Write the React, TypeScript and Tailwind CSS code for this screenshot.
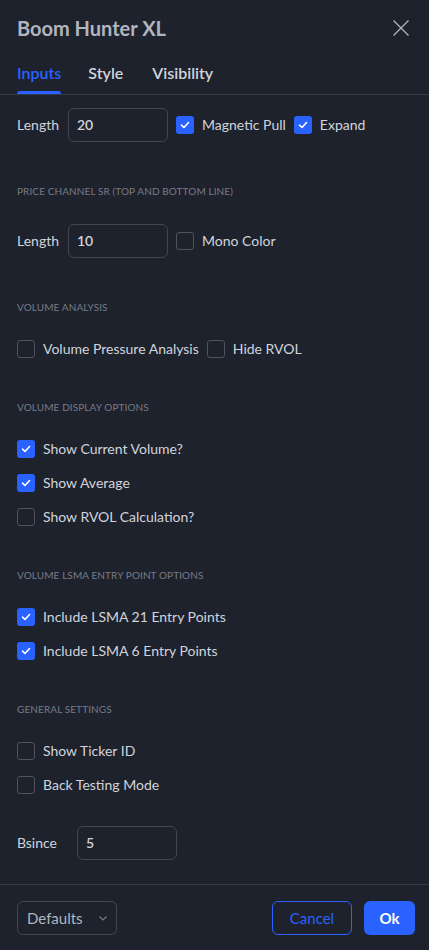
import React from "react";

function Check({ on }: { on?: boolean }) {
  if (on) {
    return (
      <span className="flex h-[18px] w-[18px] shrink-0 items-center justify-center rounded-[3px] bg-[#2962ff]">
        <svg width="12" height="12" viewBox="0 0 12 12" fill="none">
          <path d="M2.5 6.2 5 8.5l4.5-5" stroke="#fff" strokeWidth="1.6" strokeLinecap="round" strokeLinejoin="round" />
        </svg>
      </span>
    );
  }
  return <span className="h-[18px] w-[18px] shrink-0 rounded-[3px] border border-[#50535e]" />;
}

function CheckItem({ label, on }: { label: string; on?: boolean }) {
  return (
    <div className="flex items-center gap-2">
      <Check on={on} />
      <span className="-translate-y-px">{label}</span>
    </div>
  );
}

function Field({ value, w = "w-[100px]" }: { value: string; w?: string }) {
  return (
    <div className={`flex h-[34px] ${w} items-center rounded-md border border-[#434651] px-2 font-semibold text-[#d1d4dc]`}>
      <span className="-translate-y-px">{value}</span>
    </div>
  );
}

function Heading({ children, className = "" }: { children: React.ReactNode; className?: string }) {
  return <div className={`h-4 text-[10px] leading-4 tracking-[0.1px] text-[#787b86] ${className}`}>{children}</div>;
}

export default function App() {
  return (
    <div
      className="flex h-[950px] w-[429px] flex-col bg-[#1e222d] text-[14px] text-[#d1d4dc]"
      style={{ fontFamily: "Lato, 'Noto Sans', sans-serif" }}
    >
      {/* Header */}
      <div className="flex h-14 items-center justify-between px-[17px]">
        <div className="text-[20px] font-bold text-[#b2b5be]">Boom Hunter XL</div>
        <svg width="18" height="18" viewBox="0 0 18 18" fill="none" className="mr-[2px]">
          <path d="M1.5 1.5l15 15M16.5 1.5l-15 15" stroke="#b2b5be" strokeWidth="1.3" />
        </svg>
      </div>

      {/* Tabs */}
      <div className="flex h-[39px] border-b border-[#363a45] px-[17px] text-[16px] font-semibold">
        <div className="flex flex-col justify-between text-[#2962ff]">
          <span className="pt-[5px]">Inputs</span>
          <span className="h-[3px] rounded-t-sm bg-[#2962ff]" />
        </div>
        <span className="ml-[27px] pt-[5px] text-[#d1d4dc]">Style</span>
        <span className="ml-[29px] pt-[5px] text-[#d1d4dc]">Visibility</span>
      </div>

      {/* Body */}
      <div className="flex-1 px-[17px] pt-[13px]">
        <div className="flex h-[34px] items-center gap-2">
          <span className="mr-[1px] -translate-y-px">Length</span>
          <Field value="20" />
          <CheckItem label="Magnetic Pull" on />
          <CheckItem label="Expand" on />
        </div>

        <Heading className="mt-[41px]">PRICE CHANNEL SR (TOP AND BOTTOM LINE)</Heading>
        <div className="mt-[25px] flex h-[34px] items-center gap-2">
          <span className="mr-[1px] -translate-y-px">Length</span>
          <Field value="10" />
          <CheckItem label="Mono Color" />
        </div>

        <Heading className="mt-[41px]">VOLUME ANALYSIS</Heading>
        <div className="mt-[17px] flex h-[34px] items-center gap-2">
          <CheckItem label="Volume Pressure Analysis" />
          <CheckItem label="Hide RVOL" />
        </div>

        <Heading className="mt-[33px]">VOLUME DISPLAY OPTIONS</Heading>
        <div className="mt-[17px] flex flex-col">
          <div className="flex h-[34px] items-center"><CheckItem label="Show Current Volume?" on /></div>
          <div className="flex h-[34px] items-center"><CheckItem label="Show Average" on /></div>
          <div className="flex h-[34px] items-center"><CheckItem label="Show RVOL Calculation?" /></div>
        </div>

        <Heading className="mt-[33px]">VOLUME LSMA ENTRY POINT OPTIONS</Heading>
        <div className="mt-[17px] flex flex-col">
          <div className="flex h-[34px] items-center"><CheckItem label="Include LSMA 21 Entry Points" on /></div>
          <div className="flex h-[34px] items-center"><CheckItem label="Include LSMA 6 Entry Points" on /></div>
        </div>

        <Heading className="mt-[33px]">GENERAL SETTINGS</Heading>
        <div className="mt-[17px] flex flex-col">
          <div className="flex h-[34px] items-center"><CheckItem label="Show Ticker ID" /></div>
          <div className="flex h-[34px] items-center"><CheckItem label="Back Testing Mode" /></div>
        </div>

        <div className="mt-[24px] flex h-[34px] items-center">
          <span className="w-[60px] -translate-y-px">Bsince</span>
          <Field value="5" />
        </div>
      </div>

      {/* Footer */}
      <div className="flex h-[66px] items-start justify-between border-t border-[#363a45] pl-[17px] pr-[14px] pt-4">
        <div className="flex h-[34px] w-[100px] items-center justify-between rounded-md border border-[#434651] pl-[9px] pr-[7px] text-[15px] text-[#b2b5be]">
          <span>Defaults</span>
          <svg width="12" height="12" viewBox="0 0 12 12" fill="none">
            <path d="M2.5 4.5 6 8l3.5-3.5" stroke="#787b86" strokeWidth="1.2" />
          </svg>
        </div>
        <div className="flex gap-3">
          <div className="flex h-[34px] w-[80px] items-center justify-center rounded-md border border-[#2962ff] text-[15px] text-[#2962ff]">
            Cancel
          </div>
          <div className="flex h-[34px] w-[51px] items-center justify-center rounded-md bg-[#2962ff] text-[15px] font-bold text-white">
            Ok
          </div>
        </div>
      </div>
    </div>
  );
}
